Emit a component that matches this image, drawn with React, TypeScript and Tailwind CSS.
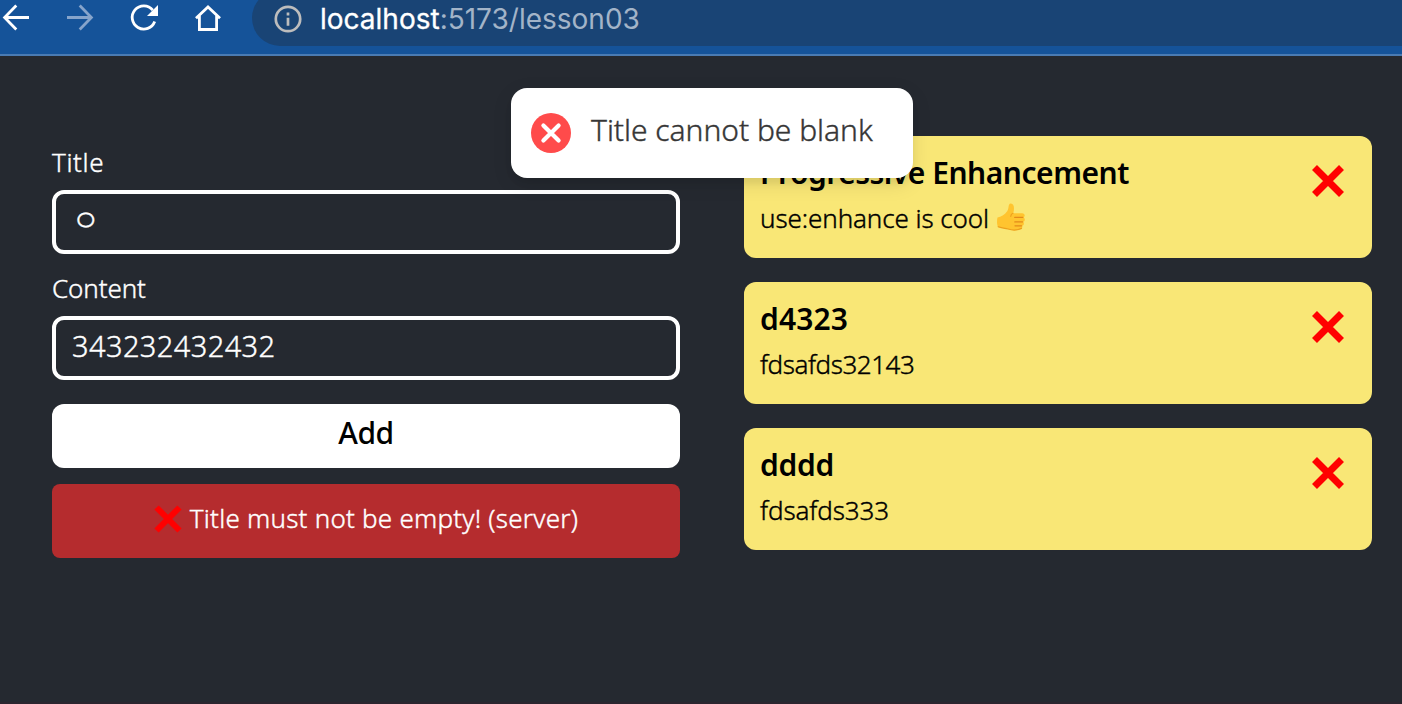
import React from "react";

const notes = [
  { title: "Progressive Enhancement", content: "use:enhance is cool", thumb: true, titleClass: "tracking-[-0.48px]", contentClass: "tracking-[-0.1px]" },
  { title: "d4323", content: "fdsafds32143", thumb: false, titleClass: "tracking-[0.1px]", contentClass: "tracking-[-0.45px]" },
  { title: "dddd", content: "fdsafds333", thumb: false, titleClass: "tracking-[-0.3px]", contentClass: "tracking-[-0.1px]" },
];

function BrowserBar() {
  return (
    <header className="flex h-14 shrink-0 border-b-2 border-[#4a7bb3] bg-[#155399] text-white">
      <div className="flex w-[252px] shrink-0">
        <svg width="252" height="54" viewBox="0 0 252 54" fill="none" stroke="#fff" strokeWidth="2.8">
          <path d="M29 17.5H5M16.3 5.5L4.6 17.5l11.700 12" />
          <path d="M67 17.5h24M79.700 5.500L91.400 17.500l-11.700 12" stroke="#86a4cb" />
          <path d="M154.700 21.400a11.600 11.600 0 1 1-1.900-11.300" />
          <path d="M158 5v11h-11z" fill="#fff" stroke="none" />
          <path d="M196 18.300L208 7l12 11.300M199.400 15.500v14h17.200v-14" />
        </svg>
      </div>
      <div className="-mt-2.5 flex h-14 min-w-0 flex-1 items-center rounded-l-full bg-[#194475] pl-[22px]">
        <svg className="mt-px" width="28" height="28" viewBox="0 0 28 28" fill="none" stroke="#bdbdbd" strokeWidth="2.7">
          <circle cx="14" cy="14" r="12.200" />
          <path d="M14 12.700v8M14 7.600v3" />
        </svg>
        <span className="ml-[18px] mt-px whitespace-nowrap font-['Inter',sans-serif] text-[28px] leading-8 text-[#a3b4c8]">
          <span className="text-white [-webkit-text-stroke:0.3px]">localhost</span>:5173/lesson03
        </span>
      </div>
    </header>
  );
}

function Cross() {
  return (
    <svg width="32" height="32" viewBox="0 0 32 32" stroke="#ff0000" strokeWidth="7">
      <path d="M2.500 2.500l27 27M29.500 2.500l-27 27" />
    </svg>
  );
}

function ThumbsUp() {
  return (
    <svg className="-mt-0.5" width="28" height="28" viewBox="0 0 28 28">
      <path d="M.5 14.500c3.500-.5 7-2.500 9.700-6.200C12.300 5.200 10.900.8 13.600.5c3.800-.3 4 5.500 2.600 9.800l8.900-.1c3 .2 3.300 3.500 1.400 4.200 1.900.8 1.700 3.900-.3 4.400 1.300 1.200.7 3.400-1 3.900.7 1.600-.3 3.100-2.400 3.600-3.700 1.300-9.300 1-11.700-.3C7.200 25 4 25 1 24-.2 21.500-.2 17.500.5 14.500z" fill="#ffc42f" />
      <path d="M25.800 14.400h-8.100M25.500 18.900h-7.700M24.500 22.800h-6.500" fill="none" stroke="#e48a1a" strokeWidth="1.200" strokeLinecap="round" />
      <path d="M16 10.300c-1.300.4-2.100 1.400-2.200 3M24.500 25.400c-3.700 1.800-9.600 1.900-13.400.6C8 25 4 25 1.200 23.800" fill="none" stroke="#eda01d" strokeWidth="1.200" strokeLinecap="round" />
    </svg>
  );
}

export default function App() {
  return (
    <div className="relative flex h-[704px] w-[1402px] flex-col overflow-hidden bg-[#252930] font-['Noto_Sans','Noto_Sans_CJK_KR',sans-serif]">
      <BrowserBar />
      <main className="flex flex-1 items-start gap-16 border-b-2 border-[#2b252f] pl-[52px] pr-[30px] pt-20">
        <form className="flex w-[628px] flex-col text-white" onSubmit={(e) => e.preventDefault()}>
          <label className="mt-1.5 flex h-12 text-[26px] font-light leading-10 tracking-[0.6px] [-webkit-text-stroke:0.4px]">Title</label>
          <div className="flex h-16 items-center rounded-xl border-4 border-white px-4">
            <span className="pb-1 text-[30px] font-light leading-10 [-webkit-text-stroke:0.4px]">ㅇ</span>
          </div>
          <label className="mt-3.5 flex h-12 text-[26px] font-light leading-10 tracking-[-0.1px] [-webkit-text-stroke:0.4px]">Content</label>
          <div className="flex h-16 items-center rounded-xl border-4 border-white px-4">
            <span className="pb-1 text-[29px] font-light leading-10 tracking-[0.4px] [-webkit-text-stroke:0.4px]">343232432432</span>
          </div>
          <button className="mt-6 h-16 rounded-xl bg-white pb-1.5 text-[30px] font-medium leading-10 tracking-[-0.5px] text-black">Add</button>
          <div className="mt-4 flex h-[74px] items-center justify-center rounded-lg bg-[#b52c2e] pb-1.5">
            <svg className="mr-2 mt-0.5" width="28" height="28" viewBox="0 0 28 28" stroke="#ff0000" strokeWidth="6">
              <path d="M2.500 2.500l23 23M25.500 2.500l-23 23" />
            </svg>
            <span className="whitespace-nowrap text-[26px] font-light tracking-[0.23px] [-webkit-text-stroke:0.4px]">Title must not be empty! (server)</span>
          </div>
        </form>
        <section className="flex w-[628px] flex-col gap-6">
          {notes.map((note) => (
            <article key={note.title} className="flex h-[122px] justify-between rounded-xl bg-[#f9e776] pl-4 pr-7 text-black">
              <div className="pt-[17px]">
                <h2 className={`whitespace-nowrap text-[30px] font-semibold leading-10 ${note.titleClass}`}>{note.title}</h2>
                <p className={`mt-[5px] flex items-center gap-2 whitespace-nowrap text-[26px] font-light leading-10 [-webkit-text-stroke:0.4px] ${note.contentClass}`}>
                  <span>{note.content}</span>
                  {note.thumb && <ThumbsUp />}
                </p>
              </div>
              <button className="mt-[29px] h-8" aria-label="Delete note"><Cross /></button>
            </article>
          ))}
        </section>
      </main>
      <div className="absolute left-[511px] top-[88px] flex h-[90px] w-[402px] items-center rounded-2xl bg-white pl-5 shadow-[0_6px_20px_rgba(0,0,0,0.10),0_6px_6px_rgba(0,0,0,0.05)]">
        <svg width="40" height="40" viewBox="0 0 40 40">
          <circle cx="20" cy="20" r="20" fill="#ff4b4b" />
          <path d="M12.400 12.400l15.200 15.200M27.600 12.400L12.400 27.600" stroke="#fff" strokeWidth="4.200" strokeLinecap="round" />
        </svg>
        <span className="ml-5 whitespace-nowrap pb-2 text-[30px] font-light tracking-[-0.03px] text-[#363636] [-webkit-text-stroke:0.4px]">Title cannot be blank</span>
      </div>
    </div>
  );
}
